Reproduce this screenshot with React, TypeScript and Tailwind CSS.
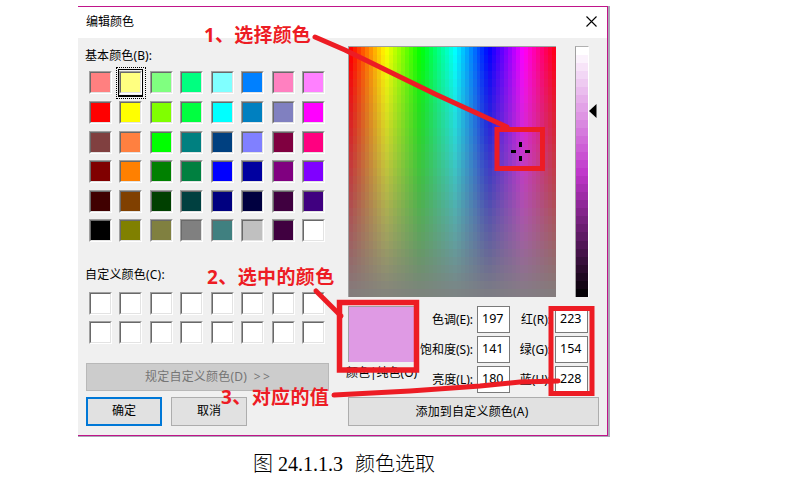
import React from "react";

const basicColors = [
  "#ff8080", "#ffff80", "#80ff80", "#00ff80", "#80ffff", "#0080ff", "#ff80c0", "#ff80ff",
  "#ff0000", "#ffff00", "#80ff00", "#00ff40", "#00ffff", "#0080c0", "#8080c0", "#ff00ff",
  "#804040", "#ff8040", "#00ff00", "#008080", "#004080", "#8080ff", "#800040", "#ff0080",
  "#800000", "#ff8000", "#008000", "#008040", "#0000ff", "#0000a0", "#800080", "#8000ff",
  "#400000", "#804000", "#004000", "#004040", "#000080", "#000040", "#400040", "#400080",
  "#000000", "#808000", "#808040", "#808080", "#408080", "#c0c0c0", "#400040", "#ffffff",
];
const customColors = Array.from({ length: 16 }, () => "#ffffff");
const steps = (n: number) => Array.from({ length: n }, (_, i) => i);

function Swatch({ color, selected = false }: { color: string; selected?: boolean }) {
  return (
    <div className="relative h-[23px] w-[23px] border border-t-[#a0a0a0] border-l-[#a0a0a0] border-r-white border-b-white">
      <div
        className="h-full w-full border border-t-[#696969] border-l-[#696969] border-r-[#e3e3e3] border-b-[#e3e3e3]"
        style={{ backgroundColor: color }}
      />
      {selected && (
        <>
          <div className="absolute -top-[3px] -left-[2px] h-[28px] w-[25px] border border-b-2 border-black" />
          <div className="absolute -top-[5px] -left-[4px] h-[32px] w-[30px] border border-dotted border-black" />
        </>
      )}
    </div>
  );
}

function Swatches({ colors, selected }: { colors: string[]; selected?: number }) {
  return (
    <div className="ml-1 grid auto-rows-[29.6px] grid-cols-[repeat(8,30.45px)]">
      {colors.map((c, i) => (
        <Swatch key={i} color={c} selected={i === selected} />
      ))}
    </div>
  );
}

function Spectrum() {
  return (
    <div className="relative flex h-[251px] w-[208px] border-t border-l border-[#a0a0a0]">
      {steps(52).map((i) => (
        <div key={i} className="h-full flex-1" style={{ backgroundColor: `hsl(${(i / 52) * 360} 100% 50%)` }} />
      ))}
      <div className="absolute inset-0 flex flex-col">
        {steps(31).map((i) => (
          <div key={i} className="flex-1" style={{ backgroundColor: `rgb(128 128 128 / ${i / 31})` }} />
        ))}
      </div>
    </div>
  );
}

function LuminanceBar() {
  return (
    <div className="ml-[19px] flex h-[251px] w-[14px] flex-col border border-t-[#b0b0b0] border-r-white border-b-0 border-l-[#a0a0a0]">
      {steps(31).map((i) => (
        <div key={i} className="flex-1" style={{ backgroundColor: `hsl(295.5 58.75% ${100 - (i / 30.5) * 100}%)` }} />
      ))}
    </div>
  );
}

function Field({ label, value }: { label: string; value: string }) {
  return (
    <div className="flex h-[27px] items-center justify-end gap-1">
      <span className="whitespace-nowrap">{label}</span>
      <div className="h-[27px] w-[33px] shrink-0 border border-[#7a7a7a] bg-white pl-[4px] text-[12.5px] leading-[23px]">
        {value}
      </div>
    </div>
  );
}

export default function App() {
  return (
    <div className="relative h-[485px] w-[791px] overflow-hidden bg-white pt-[6px] font-['Noto_Sans','Noto_Sans_CJK_SC',sans-serif] text-[12px] leading-[18px] text-black">
      <div className="ml-[78px] flex h-[431px] w-[532px] flex-col border-r-2 border-b border-[#a9a9b5]">
        <div className="flex h-[430px] w-[530px] flex-col border-t border-r border-b border-[#c0148a] bg-[#f0f0f0]">
          <div className="flex h-[31px] shrink-0 items-center justify-between bg-white pr-[10px] pb-[2px] pl-2">
            <span>编辑颜色</span>
            <svg width="11" height="11" viewBox="0 0 11 11" className="stroke-black" strokeWidth="1.1">
              <path d="M.5 .5 10.5 10.5M10.5 .5 .5 10.5" />
            </svg>
          </div>
          <div className="flex pl-[7px]">
            <div className="w-[262px] shrink-0">
              <div className="mt-[9px] h-[24.4px] tracking-[0.12px]">基本颜色(B):</div>
              <Swatches colors={basicColors} selected={1} />
              <div className="mt-[17.4px] mb-[7.4px] h-[18px] tracking-[0.2px]">自定义颜色(C):</div>
              <Swatches colors={customColors} />
              <button className="mt-[12px] ml-px flex h-[28px] w-[243px] items-center justify-center border border-[#b8b8b8] bg-[#cccccc] tracking-[0.2px] text-[#757575]">
                规定自定义颜色(D)&nbsp; &gt;&thinsp;&gt;
              </button>
              <div className="mt-[6px] ml-px flex gap-[9px]">
                <button className="h-[29px] w-[76px] border-2 border-[#0078d7] bg-[#e1e1e1]">确定</button>
                <button className="h-[29px] w-[76px] border border-[#adadad] bg-[#e1e1e1]">取消</button>
              </div>
            </div>
            <div className="mt-[8px]">
              <div className="flex">
                <div className="ml-px">
                  <Spectrum />
                </div>
                <LuminanceBar />
                <svg width="8" height="14" viewBox="0 0 8 14" className="mt-[58px]">
                  <path d="M7.5 0V14L0 7Z" />
                </svg>
              </div>
              <div className="mt-[9px] flex h-[91px]">
                <div className="w-[72px]">
                  <div className="ml-px h-[56px] w-[68px] border-t border-l border-[#a0a0a0] bg-[#df9ae4]" />
                  <div className="mt-[2px] -ml-px whitespace-nowrap">颜色|纯色(O)</div>
                </div>
                <div className="flex w-[91px] flex-col gap-[3px]">
                  <Field label="色调(E):" value="197" />
                  <Field label="饱和度(S):" value="141" />
                  <Field label="亮度(L):" value="180" />
                </div>
                <div className="flex w-[78px] flex-col gap-[3px]">
                  <Field label="红(R):" value="223" />
                  <Field label="绿(G):" value="154" />
                  <Field label="蓝(U):" value="228" />
                </div>
              </div>
              <button className="ml-px h-[29px] w-[251px] border border-[#adadad] bg-[#e1e1e1] pr-[3px] tracking-[0.2px]">添加到自定义颜色(A)</button>
            </div>
          </div>
        </div>
      </div>
      <p className="mt-[12px] ml-[253px] font-['Liberation_Serif','Noto_Sans_CJK_SC',serif] text-[20px] leading-[30px] font-light whitespace-pre">
        图 24.1.1.3<span className="ml-[2px]">{"  颜色选取"}</span>
      </p>

      <svg className="absolute inset-0" width="791" height="485" fill="none">
        <path d="M520.500 142v5M520.500 156v5M511 151.500h5M525 151.500h5" stroke="#000" strokeWidth="3" />
        <g stroke="#ed1c24" strokeWidth="5">
          <path d="M315 37 345 50 435 94 507 127" strokeLinecap="round" />
          <rect x="497" y="129.500" width="45.500" height="39" />
          <path d="M316 291 341 316" strokeLinecap="round" />
          <rect x="339.500" y="302.500" width="77" height="67.500" strokeWidth="5.500" />
          <path d="M334 395 410 391 480 386 520 382 558 381" strokeLinecap="round" />
          <rect x="551" y="308.500" width="41" height="85" />
        </g>
      </svg>
      <div className="absolute top-[21px] left-[204px] text-[19px] leading-[28px] font-bold tracking-[0.2px] whitespace-nowrap text-[#ed1c24]">1、选择颜色</div>
      <div className="absolute top-[263px] left-[207px] text-[19px] leading-[28px] font-bold tracking-[0.4px] whitespace-nowrap text-[#ed1c24]">2、选中的颜色</div>
      <div className="absolute top-[383px] left-[221px] text-[19px] leading-[28px] font-bold tracking-[0.4px] whitespace-nowrap text-[#ed1c24]">3、对应的值</div>
    </div>
  );
}
